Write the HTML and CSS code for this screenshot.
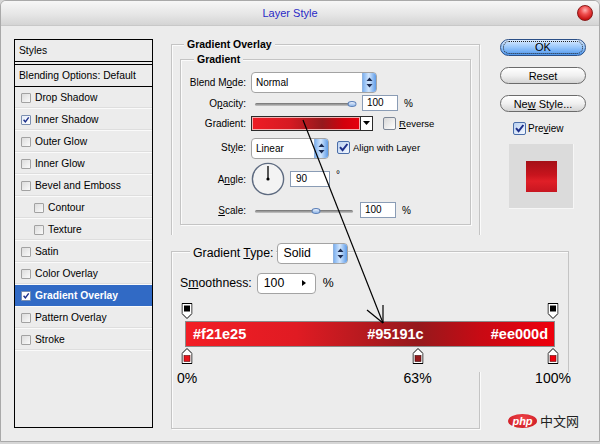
FILE: index.html
```html
<!DOCTYPE html>
<html lang="en">
  <head>
    <meta charset="UTF-8" />
    <meta name="viewport" content="width=device-width, initial-scale=1.0" />
    <title>Layer Style</title>
    <link rel="stylesheet" href="styles.css">
  </head>
  <body>
    <div class="window">
      <div class="titlebar">
        <div class="title">Layer Style</div>
        <div class="close"></div>
      </div>

      <div class="content">
        <!-- 左のスタイル一覧 -->
        <div class="styles-list">
          <div class="list-head">Styles</div>
          <div class="list-blend">Blending Options: Default</div>
          <div class="list-row"><span class="cb"></span>Drop Shadow</div>
          <div class="list-row">
            <span class="cb on">
              <svg width="10" height="10" viewBox="0 0 10 10"><path d="M2 4.8L4.2 7.4L8.4 1.8" fill="none" stroke="#1d2f8a" stroke-width="1.8"/></svg>
            </span>Inner Shadow
          </div>
          <div class="list-row"><span class="cb"></span>Outer Glow</div>
          <div class="list-row"><span class="cb"></span>Inner Glow</div>
          <div class="list-row"><span class="cb"></span>Bevel and Emboss</div>
          <div class="list-row sub"><span class="cb"></span>Contour</div>
          <div class="list-row sub"><span class="cb"></span>Texture</div>
          <div class="list-row"><span class="cb"></span>Satin</div>
          <div class="list-row"><span class="cb"></span>Color Overlay</div>
          <div class="list-row selected">
            <span class="cb on">
              <svg width="10" height="10" viewBox="0 0 10 10"><path d="M2 4.8L4.2 7.4L8.4 1.8" fill="none" stroke="#1d2f8a" stroke-width="1.8"/></svg>
            </span>Gradient Overlay
          </div>
          <div class="list-row"><span class="cb"></span>Pattern Overlay</div>
          <div class="list-row"><span class="cb"></span>Stroke</div>
        </div>

        <!-- 中央の設定 -->
        <div class="main">
          <div class="group outer">
            <div class="legend">Gradient Overlay</div>
            <div class="group inner">
              <div class="legend">Gradient</div>
              <div class="rows">
                <div class="frow h22">
                  <span class="lbl">Blend M<u>o</u>de:</span>
                  <div class="select blend">
                    <span>Normal</span>
                    <span class="spin"><svg width="7" height="11" viewBox="0 0 7 11"><path d="M0.5 4L3.5 0.5L6.5 4Z M0.5 7L3.5 10.5L6.5 7Z" fill="#1b2b52"/></svg></span>
                  </div>
                </div>
                <div class="frow h20">
                  <span class="lbl">O<u>p</u>acity:</span>
                  <div class="slider"><div class="thumb" style="left: 97%"></div></div>
                  <div class="num">100</div>
                  <span class="unit">%</span>
                </div>
                <div class="frow h20">
                  <span class="lbl">Gradient:</span>
                  <div class="swatch"></div>
                  <div class="drop"><svg width="7" height="4" viewBox="0 0 7 4"><path d="M0 0H7L3.5 4Z" fill="#000"/></svg></div>
                  <span class="check reverse"></span>
                  <span class="small"><u>R</u>everse</span>
                </div>
                <div class="frow h29">
                  <span class="lbl">St<u>y</u>le:</span>
                  <div class="select style">
                    <span>Linear</span>
                    <span class="spin"><svg width="7" height="11" viewBox="0 0 7 11"><path d="M0.5 4L3.5 0.5L6.5 4Z M0.5 7L3.5 10.5L6.5 7Z" fill="#1b2b52"/></svg></span>
                  </div>
                  <span class="check on align">
                    <svg width="11" height="11" viewBox="0 0 11 11"><path d="M2 5.2L4.6 8.2L9.4 2" fill="none" stroke="#1d2f8a" stroke-width="2"/></svg>
                  </span>
                  <span class="small">Align with Layer</span>
                </div>
                <div class="frow h34">
                  <span class="lbl">A<u>n</u>gle:</span>
                  <svg class="dial" width="34" height="34" viewBox="0 0 34 34">
                    <circle cx="17" cy="17" r="15.6" fill="#f3f3f3" stroke="#5e6b80" stroke-width="1.4"/>
                    <line x1="17" y1="17" x2="17" y2="4" stroke="#000" stroke-width="1.3"/>
                    <circle cx="17" cy="17" r="1.6" fill="#000"/>
                  </svg>
                  <div class="num angle">90</div>
                  <span class="deg">°</span>
                </div>
                <div class="frow h28">
                  <span class="lbl"><u>S</u>cale:</span>
                  <div class="slider short"><div class="thumb" style="left: 62%"></div></div>
                  <div class="num">100</div>
                  <span class="unit">%</span>
                </div>
              </div>
            </div>
          </div>
        </div>

        <!-- 右のボタン -->
        <div class="side">
          <div class="btn ok"><span>OK</span></div>
          <div class="btn"><span>Reset</span></div>
          <div class="btn"><span>Ne<u>w</u> Style...</span></div>
          <div class="preview-row">
            <span class="check on">
              <svg width="11" height="11" viewBox="0 0 11 11"><path d="M2 5.2L4.6 8.2L9.4 2" fill="none" stroke="#1d2f8a" stroke-width="2"/></svg>
            </span>
            <span>Pre<u>v</u>iew</span>
          </div>
          <div class="preview"><div class="preview-swatch"></div></div>
        </div>
      </div>
    </div>

    <!-- 貼り付けたグラデーションエディタ部分 -->
    <div class="editor">
      <div class="gt-box">
        <div class="gt-legend">
          <span class="gt-label">Gradient <u>T</u>ype:</span>
          <div class="select solid">
            <span>Solid</span>
            <span class="spin"><svg width="7" height="11" viewBox="0 0 7 11"><path d="M0.5 4L3.5 0.5L6.5 4Z M0.5 7L3.5 10.5L6.5 7Z" fill="#1b2b52"/></svg></span>
          </div>
        </div>
        <div class="smooth-row">
          <span>S<u>m</u>oothness:</span>
          <div class="smooth-input">
            <span>100</span>
            <svg width="4" height="6" viewBox="0 0 4 6"><path d="M0 0L4 3L0 6Z" fill="#000"/></svg>
          </div>
          <span class="smooth-unit">%</span>
        </div>
        <div class="stops top">
          <span class="stop" style="left: 0%">
            <svg width="11" height="16" viewBox="0 0 11 16"><path d="M0.5 0.5H10.5V10.5L5.5 15.5L0.5 10.5Z" fill="#fff" stroke="#000"/><rect x="2.5" y="2.5" width="6" height="6" fill="#000"/></svg>
          </span>
          <span class="stop" style="left: 100%">
            <svg width="11" height="16" viewBox="0 0 11 16"><path d="M0.5 0.5H10.5V10.5L5.5 15.5L0.5 10.5Z" fill="#fff" stroke="#000"/><rect x="2.5" y="2.5" width="6" height="6" fill="#000"/></svg>
          </span>
        </div>
        <div class="gbar">
          <span>#f21e25</span>
          <span class="mid">#95191c</span>
          <span class="end">#ee000d</span>
        </div>
        <div class="stops bottom">
          <span class="stop" style="left: 0%">
            <svg width="11" height="16" viewBox="0 0 11 16"><path d="M0.5 15.5H10.5V5.5L5.5 0.5L0.5 5.5Z" fill="#fff" stroke="#000"/><rect x="2.5" y="7.5" width="6" height="6" fill="#e8141c" stroke="#5a0a0a" stroke-width="0.6"/></svg>
          </span>
          <span class="stop" style="left: 63%">
            <svg width="11" height="16" viewBox="0 0 11 16"><path d="M0.5 15.5H10.5V5.5L5.5 0.5L0.5 5.5Z" fill="#fff" stroke="#000"/><rect x="2.5" y="7.5" width="6" height="6" fill="#95191c" stroke="#3a0808" stroke-width="0.6"/></svg>
          </span>
          <span class="stop" style="left: 100%">
            <svg width="11" height="16" viewBox="0 0 11 16"><path d="M0.5 15.5H10.5V5.5L5.5 0.5L0.5 5.5Z" fill="#fff" stroke="#000"/><rect x="2.5" y="7.5" width="6" height="6" fill="#ee000d" stroke="#5a0a0a" stroke-width="0.6"/></svg>
          </span>
        </div>
        <div class="stop-labels">
          <span style="left: 0%">0%</span>
          <span style="left: 63%">63%</span>
          <span style="left: 100%">100%</span>
        </div>
      </div>
    </div>

    <!-- 矢印 -->
    <svg class="arrow" width="600" height="444" viewBox="0 0 600 444">
      <line x1="303" y1="120" x2="383" y2="323" stroke="#000" stroke-width="1.2"/>
      <line x1="383" y1="305" x2="383" y2="323" stroke="#000" stroke-width="1.2"/>
      <line x1="367" y1="310" x2="383" y2="323" stroke="#000" stroke-width="1.2"/>
    </svg>

    <div class="watermark">
      <span class="php">php</span>
      <span class="cn">中文网</span>
    </div>
  </body>
</html>
```

FILE: styles.css
```css
* {
  box-sizing: border-box;
}

body {
  margin: 0;
  width: 600px;
  height: 444px;
  position: relative;
  overflow: hidden;
  background: #d6d6d6;
  font-family: "Liberation Sans", Arial, sans-serif;
  font-size: 10px;
  color: #000;
}

u {
  text-decoration: underline;
  text-underline-offset: 1px;
}

/* ウィンドウ */
.window {
  width: 600px;
  height: 442px;
  background: #ececec;
  border: 1px solid #a9a9a9;
  border-radius: 6px 6px 0 0;
  overflow: hidden;
}

.titlebar {
  height: 25px;
  display: flex;
  align-items: center;
  background: linear-gradient(#f7f7f7, #e6e6e6 55%, #d4d4d4);
  border-bottom: 1px solid #c8c8c8;
}

.title {
  flex: 1;
  text-align: center;
  font-size: 11px;
  color: #2a2ac6;
  padding-left: 2px;
}

.close {
  width: 16px;
  height: 16px;
  margin-right: 6px;
  border-radius: 50%;
  border: 1px solid #8a1a1a;
  background: radial-gradient(circle at 50% 30%, #ffb0b0 0, #f05050 35%, #c81414 75%, #9a0c0c);
}

.content {
  display: flex;
  padding-top: 13px;
}

/* スタイル一覧 */
.styles-list {
  margin-left: 13px;
  width: 139px;
  height: 389px;
  border: 1px solid #000;
  background: #ececec;
  font-size: 10.3px;
}

.list-head {
  height: 22px;
  line-height: 21px;
  padding-left: 4px;
  border-bottom: 1px solid #000;
}

.list-blend {
  margin-top: 2px;
  height: 23px;
  line-height: 21px;
  padding-left: 4px;
  border-top: 1px solid #000;
  border-bottom: 1px solid #000;
}

.list-row {
  height: 22px;
  display: flex;
  align-items: center;
  padding-left: 6px;
  border-bottom: 1px solid #fafafa;
  box-shadow: inset 0 -1px 0 #dedede;
}

.list-row.sub {
  padding-left: 19px;
}

.list-row.selected {
  background: #316ac5;
  color: #fff;
  font-weight: bold;
  box-shadow: none;
}

.cb {
  width: 10px;
  height: 10px;
  margin-right: 4px;
  border: 1px solid #a2a2a2;
  border-radius: 1px;
  background: linear-gradient(135deg, #dcdcdc, #fafafa);
  display: flex;
  align-items: center;
  justify-content: center;
}

.cb.on {
  border-color: #7b8fb0;
  background: linear-gradient(135deg, #e4ecf8, #ffffff);
}

.selected .cb.on {
  background: #fff;
}

/* グループ枠 */
.main {
  margin-left: 18px;
}

.group {
  border: 1px solid #c4c4c4;
  box-shadow: inset 1px 1px 0 #fbfbfb, 1px 1px 0 #fbfbfb;
}

.group.outer {
  width: 309px;
  height: 385px;
  margin-top: 5px;
}

.group.inner {
  width: 291px;
  height: 166px;
  margin-top: 8px;
  margin-left: 8px;
}

.legend {
  display: block;
  width: fit-content;
  height: 13px;
  line-height: 13px;
  margin-top: -7px;
  margin-left: 12px;
  padding: 0 3px;
  background: #ececec;
  font-weight: bold;
  font-size: 10.5px;
}

.inner .legend {
  margin-left: 13px;
}

.rows {
  margin-top: 5px;
}

.frow {
  display: flex;
  align-items: center;
}

.h22 { height: 22px; }
.h20 { height: 20px; }
.h29 { height: 29px; }
.h34 { height: 34px; }
.h28 { height: 28px; }

.lbl {
  width: 65px;
  margin-right: 5px;
  text-align: right;
}

/* セレクト */
.select {
  height: 21px;
  display: flex;
  align-items: center;
  padding-left: 4px;
  background: #fff;
  border: 1px solid #a3a3a3;
  border-radius: 4px;
  overflow: hidden;
}

.select.blend {
  width: 126px;
}

.select.style {
  width: 78px;
  margin-top: 2px;
}

.spin {
  width: 14px;
  height: 100%;
  margin-left: auto;
  display: flex;
  align-items: center;
  justify-content: center;
  background: linear-gradient(90deg, #7fb2f0, #d2e6fd 45%, #5d9be8);
  border-left: 1px solid #8fb3e0;
}

/* スライダー */
.slider {
  position: relative;
  width: 100px;
  height: 3px;
  margin-left: 4px;
  margin-top: 3px;
  border-radius: 2px;
  background: linear-gradient(#6f6f6f, #c8c8c8);
}

.slider.short {
  width: 98px;
}

.thumb {
  position: absolute;
  top: -2px;
  width: 9px;
  height: 6px;
  transform: translateX(-50%);
  border-radius: 50%;
  border: 1px solid #5a7fb8;
  background: linear-gradient(#eef4ff, #8db4e6);
}

.num {
  width: 36px;
  height: 16px;
  margin-left: 7px;
  padding-left: 4px;
  line-height: 14px;
  background: #fff;
  border: 1px solid #8a9cb5;
}

.num.angle {
  width: 40px;
  margin-left: 5px;
  padding-left: 5px;
}

.unit {
  margin-left: 6px;
}

.deg {
  align-self: flex-start;
  margin-top: 7px;
  margin-left: 6px;
}

.swatch {
  width: 110px;
  height: 15px;
  border: 1px solid #2b2b2b;
  box-shadow: inset 0 0 0 1px #f3b0b0;
  background: linear-gradient(90deg, #ee1c25, #d61a22 35%, #95191c 65%, #d2000c 85%, #e6000d);
}

.drop {
  width: 12px;
  height: 15px;
  border: 1px solid #2b2b2b;
  border-left: none;
  background: #fff;
  display: flex;
  align-items: center;
  justify-content: center;
}

.check {
  width: 13px;
  height: 13px;
  border: 1px solid #7d8796;
  border-radius: 2px;
  background: linear-gradient(135deg, #d8d8d8, #ffffff);
  display: flex;
  align-items: center;
  justify-content: center;
}

.check.on {
  border-color: #4a6da8;
  background: linear-gradient(135deg, #b9d0f0, #f4f8ff);
}

.check.reverse {
  margin-left: 10px;
}

.check.align {
  margin-left: 8px;
}

.small {
  margin-left: 3px;
  font-size: 9.5px;
}

.dial {
  display: block;
}

/* 右側 */
.side {
  margin-left: 20px;
  width: 86px;
}

.btn {
  height: 17px;
  margin-bottom: 11px;
  display: flex;
  align-items: center;
  justify-content: center;
  font-size: 11px;
  border: 1px solid #6b6b6b;
  border-radius: 9px;
  background: linear-gradient(#ffffff, #f0f0f0 50%, #d4d4d4);
}

.btn.ok {
  border-color: #2b4f86;
  background: linear-gradient(#dcecff, #97c6fa 50%, #4f97ee);
}

.btn.ok span {
  display: block;
  width: 78px;
  height: 11px;
  line-height: 11px;
  text-align: center;
  outline: 1px dotted #222;
  border-radius: 5px;
}

.preview-row {
  display: flex;
  align-items: center;
  margin-left: 13px;
  margin-top: -1px;
  height: 13px;
}

.preview-row span:last-child {
  margin-left: 2px;
}

.preview {
  width: 65px;
  height: 65px;
  margin-top: 9px;
  margin-left: 9px;
  display: flex;
  align-items: center;
  justify-content: center;
  background: #dbdbdb;
  border-right: 1px solid #f6f6f6;
  border-bottom: 1px solid #f6f6f6;
}

.preview-swatch {
  width: 31px;
  height: 31px;
  background: linear-gradient(#a51017, #c8141d 45%, #e01f27 65%, #c71620);
}

/* グラデーションエディタ */
.editor {
  position: absolute;
  left: 163px;
  top: 235px;
  width: 417px;
  height: 137px;
  background: #ececec;
  font-size: 12.3px;
}

.gt-box {
  margin-top: 16px;
  margin-left: 8px;
  width: 398px;
  height: 121px;
  border: 1px solid #c4c4c4;
  border-bottom: none;
  box-shadow: inset 1px 1px 0 #fbfbfb;
}

.gt-legend {
  display: flex;
  align-items: center;
  height: 22px;
  margin-top: -10px;
}

.gt-label {
  margin-left: 18px;
  padding: 0 3px;
  background: #ececec;
}

.select.solid {
  width: 71px;
  margin-left: 1px;
  padding-left: 5px;
}

.smooth-row {
  display: flex;
  align-items: center;
  height: 22px;
  margin-top: 8px;
  padding-left: 8px;
}

.smooth-input {
  width: 59px;
  height: 21px;
  margin-left: 5px;
  padding-left: 6px;
  display: flex;
  align-items: center;
  background: #fff;
  border: 1px solid #a3a3a3;
  border-radius: 4px;
}

.smooth-input svg {
  margin-left: auto;
  margin-right: 9px;
}

.smooth-unit {
  margin-left: 7px;
}

.stops {
  position: relative;
  width: 366px;
  height: 16px;
  margin-left: 15px;
}

.stops.top {
  margin-top: 9px;
}

.stops.bottom {
  margin-top: 1px;
}

.stop {
  position: absolute;
  top: 0;
  width: 11px;
  height: 16px;
  transform: translateX(-50%);
}

.stop svg {
  display: block;
}

.gbar {
  width: 370px;
  height: 26px;
  margin-top: 2px;
  margin-left: 13px;
  padding-left: 7px;
  padding-right: 6px;
  display: flex;
  align-items: center;
  border: 1px solid #8b8b8b;
  background: linear-gradient(90deg, #f21e25, #e01b23 30%, #95191c 63%, #c80a14 80%, #ee000d);
  color: #fff;
  font-weight: bold;
  font-size: 14.5px;
}

.gbar .mid {
  margin-left: 121px;
}

.gbar .end {
  margin-left: auto;
}

.stop-labels {
  position: relative;
  width: 366px;
  height: 16px;
  margin-top: 6px;
  margin-left: 15px;
  font-size: 14px;
  line-height: 16px;
}

.stop-labels span {
  position: absolute;
  top: 0;
  transform: translateX(-50%);
}

/* 注記 */
.arrow {
  position: absolute;
  left: 0;
  top: 0;
  pointer-events: none;
}

.watermark {
  position: absolute;
  left: 508px;
  top: 414px;
  display: flex;
  align-items: center;
}

.php {
  width: 29px;
  height: 14px;
  border-radius: 50%;
  background: radial-gradient(ellipse at 50% 35%, #f0454b, #c8141c);
  color: #fff;
  font-size: 11px;
  font-weight: bold;
  font-style: italic;
  line-height: 14px;
  text-align: center;
}

.cn {
  margin-left: 3px;
  font-family: "Noto Sans CJK SC", sans-serif;
  font-size: 13px;
  line-height: 14px;
  color: #222;
}
```
